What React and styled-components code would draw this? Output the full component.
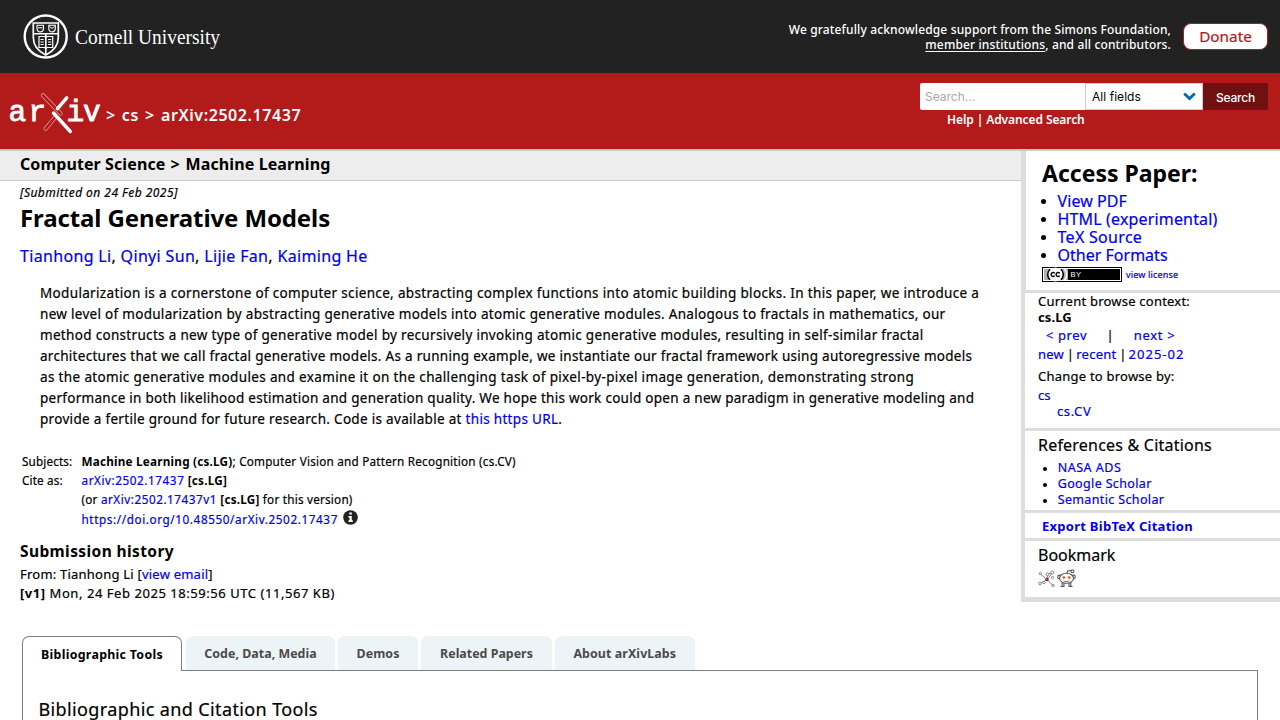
import React from "react";
import styled, { createGlobalStyle } from "styled-components";

const GlobalStyle = createGlobalStyle`
  * { box-sizing: border-box; }
  html { overflow: hidden; }
  body {
    margin: 0;
    height: 720px;
    overflow: hidden;
    background: #fff;
    color: #000;
    font-family: "Noto Sans", "Open Sans", sans-serif;
  }
`;

const Link = styled.a`
  color: ${(p) => p.$color || "#00e"};
  text-decoration: ${(p) => (p.$underline ? "underline" : "none")};
  text-decoration-thickness: 1px;
  text-underline-offset: 2px;
  letter-spacing: ${(p) => (p.$ls !== undefined ? `${p.$ls}px` : "inherit")};
`;

const Separator = styled.span`
  letter-spacing: ${(p) => p.$ls}px;
`;

const Line = styled.div`
  font-size: ${(p) => p.$size}px;
  line-height: ${(p) => p.$lh}px;
  height: ${(p) => p.$lh}px;
  letter-spacing: ${(p) => p.$ls || 0}px;
  word-spacing: ${(p) => p.$ws || 0}px;
  font-weight: ${(p) => p.$weight || 400};
  -webkit-text-stroke-width: ${(p) => (p.$weight ? 0 : 0.2)}px;
  font-style: ${(p) => (p.$italic ? "italic" : "normal")};
  margin-top: ${(p) => p.$mt || 0}px;
  padding-left: ${(p) => p.$indent || 0}px;
  white-space: pre;
  b { -webkit-text-stroke-width: 0; }
`;

const TopBar = styled.header`
  display: flex;
  justify-content: space-between;
  height: 73px;
  padding: 13px 12px 0 23px;
  background: #222;
  color: #fff;
`;

const Support = styled.div`
  display: flex;
  gap: 12px;
  text-align: right;
  padding-top: 9px;
`;

const Donate = styled.a`
  width: 85px;
  height: 27px;
  margin-top: 1px;
  border: 1px solid #b31b1b;
  border-radius: 8px;
  background: #fff;
  color: #b31b1b;
  font-size: 15.3px;
  -webkit-text-stroke-width: 0.2px;
  line-height: 24px;
  text-align: center;
`;

const RedBar = styled.div`
  display: flex;
  justify-content: space-between;
  height: 78px;
  padding: 10px 12px 0 8px;
  background: #b31b1b;
  border-bottom: 2px solid #ccc;
  color: #fff;
`;

const Brand = styled.div`
  display: flex;
  gap: 4px;
  padding-top: 8px;
`;

const SearchArea = styled.div`
  width: 348px;
`;

const SearchForm = styled.div`
  display: flex;
  height: 27px;
  margin-bottom: 2px;
  border-radius: 2px;
  overflow: hidden;
  font-family: Inter, sans-serif;
  font-size: 12px;
  line-height: 27px;
`;

const SearchInput = styled.div`
  width: 165px;
  padding-left: 5px;
  background: #fff;
  color: #a9a9a9;
`;

const FieldSelect = styled.div`
  display: flex;
  align-items: center;
  justify-content: space-between;
  width: 118px;
  padding: 0 6px;
  border: 1px solid #ccc;
  background: #fff;
  color: #000;
  letter-spacing: 0.05px;
`;

const SearchButton = styled.div`
  width: 65px;
  padding-top: 1px;
  background: #701111;
  text-align: center;
  font-weight: 500;
  letter-spacing: -0.2px;
`;

const Columns = styled.div`
  display: flex;
  height: 451px;
`;

const Main = styled.main`
  width: 1021px;
`;

const Subheader = styled.div`
  height: 30px;
  padding-left: 20px;
  background: #ededed;
  border-bottom: 1px solid #ccc;
`;

const Article = styled.div`
  padding-left: 20px;
`;

const Abstract = styled.div`
  margin-top: 17px;
  padding-left: 20px;
`;

const MetaTable = styled.div`
  display: grid;
  grid-template-columns: 59.5px 1fr;
  margin-top: 22px;
  padding-left: 2px;
`;

const InfoIcon = styled.svg`
  vertical-align: -1px;
  margin-left: 5px;
`;

const Sidebar = styled.aside`
  width: 259px;
  border-left: 4px solid #ddd;
`;

const Panel = styled.section`
  height: ${(p) => p.$h}px;
  padding: ${(p) => p.$pt || 0}px 0 0 ${(p) => p.$pl || 13}px;
  border-left: ${(p) => p.$edge || 0}px solid #ddd;
  border-bottom: ${(p) => p.$rule || 3}px solid #ddd;
`;

const BulletList = styled.ul`
  list-style: none;
  margin: ${(p) => p.$mt}px 0 0;
  padding: 0;
`;

const BulletItem = styled.li`
  display: flex;
  align-items: center;
  height: ${(p) => p.$lh}px;
  font-size: ${(p) => p.$size}px;
  -webkit-text-stroke-width: 0.2px;
  line-height: ${(p) => p.$lh}px;
  letter-spacing: ${(p) => p.$ls}px;
  white-space: nowrap;
  &::before {
    content: "";
    width: ${(p) => p.$dot}px;
    height: ${(p) => p.$dot}px;
    margin: 1px ${(p) => p.$gap}px 0 ${(p) => p.$lead}px;
    border-radius: 50%;
    background: #000;
  }
`;

const License = styled.div`
  display: flex;
  gap: 4px;
  margin-top: 3px;
`;

const Bookmarks = styled.div`
  display: flex;
  gap: 2px;
  margin-top: 4px;
`;

const Labs = styled.div`
  margin: 34px 22px 0;
`;

const Tabs = styled.div`
  display: flex;
  align-items: flex-start;
  height: 34px;
`;

const Tab = styled.div`
  position: relative;
  width: ${(p) => p.$w}px;
  height: ${(p) => (p.$active ? 35 : 34)}px;
  margin-right: ${(p) => (p.$active ? 4 : 3)}px;
  padding-top: 1px;
  border: ${(p) => (p.$active ? "1px solid #7c7c7c" : "0")};
  border-bottom: 0;
  border-radius: 7px 7px 0 0;
  background: ${(p) => (p.$active ? "#fff" : "#ecf4f8")};
  color: ${(p) => (p.$active ? "#000" : "#4a4a4a")};
  font-size: 12.4px;
  font-weight: 700;
  line-height: 33px;
  letter-spacing: ${(p) => p.$ls}px;
  text-align: center;
  white-space: nowrap;
`;

const LabPanel = styled.div`
  height: 50px;
  padding: 25px 0 0 15.5px;
  border: 1px solid #7c7c7c;
  border-bottom: 0;
`;

const CornellLogo = () => (
  <svg width="220" height="48" viewBox="23 13 220 48" fill="none" stroke="#fff">
    <circle cx="45.700" cy="36.500" r="21" strokeWidth="2.400" />
    <path d="M33.300 23h25v14.500c0 8-4.500 13.500-12.500 17.500c-8-4-12.500-9.500-12.500-17.500z" strokeWidth="1.700" />
    <path d="M33.500 33.800h24.500M45.800 34v20.500" strokeWidth="1.600" />
    <path d="M37 25.200h6.500v3.500c0 2-1.300 3-3.200 3.300c-2-.3-3.300-1.300-3.300-3.300zM48.800 25.200h6.500v3.500c0 2-1.300 3-3.200 3.300c-2-.3-3.300-1.300-3.300-3.300z" strokeWidth="1.100" />
    <path d="M38 27.800h4.500M49.500 26.500l2.500 2l2.500-2" strokeWidth="1" />
    <path d="M39 36.500h5.500l1.300 1l1.300-1h5.600v11h-5.600l-1.300 1l-1.300-1h-5.500z" strokeWidth="1.200" />
    <path d="M40.500 39.500h3.200M40.500 42h3.200M40.500 44.500h3.200M48 39.500h3.200M48 42h3.200M48 44.500h3.200" strokeWidth="1" />
    <text x="75" y="44" fill="#fff" stroke="none" fontFamily="'Liberation Serif', serif" fontSize="22" textLength="145" lengthAdjust="spacingAndGlyphs">
      Cornell University
    </text>
  </svg>
);

const ArxivLogo = () => (
  <svg width="94" height="46" viewBox="8 91 94 46" fill="none" stroke="#fff">
    <g fill="#fff" stroke="#fff" strokeWidth=".8" fontFamily="'Liberation Mono', monospace" fontSize="29.500">
      <text x="8.500" y="121">a</text>
      <text x="28.500" y="121">r</text>
      <text x="66.500" y="121">i</text>
      <text x="83" y="121">v</text>
    </g>
    <g strokeLinecap="round">
      <path d="M43 95.300L60.500 113.500M55 117.500L45.700 128.700" stroke="#dc9494" strokeWidth="4.200" />
      <path d="M43 95.300L60.500 113.500M55 117.500L45.700 128.700" stroke="#b31b1b" strokeWidth="2.600" />
      <path d="M66.700 97.800L57.500 108.700M53.500 113L70.300 131.500" strokeWidth="3.400" />
    </g>
  </svg>
);

const LicenseBadge = () => (
  <svg width="80" height="15" viewBox="0 0 80 15">
    <rect width="80" height="15" fill="#000" />
    <rect x="1" y="1" width="78" height="13" fill="#fff" />
    <rect x="2" y="2" width="24" height="11" fill="#aab2ab" />
    <rect x="26" y="2" width="52" height="11" fill="#000" />
    <circle cx="13.500" cy="7.500" r="7" fill="#fff" />
    <path d="M8 2.200a7.200 7.200 0 0 0 0 10.600M19 2.200a7.200 7.200 0 0 1 0 10.600" fill="none" stroke="#000" strokeWidth="1.500" />
    <path d="M22.500 2a8 8 0 0 1 0 11" fill="none" stroke="#fff" strokeWidth="1.500" />
    <path d="M12.700 6.300a2 2 0 1 0 0 2.400M17.700 6.300a2 2 0 1 0 0 2.400" fill="none" stroke="#000" strokeWidth="1.400" />
    <text x="28.500" y="10" fill="#fff" fontFamily="'Liberation Sans', sans-serif" fontSize="7.500" letterSpacing=".4">BY</text>
  </svg>
);

const BibSonomy = () => (
  <svg width="17" height="19" viewBox="0 0 17 19" fill="none" stroke="#777" strokeWidth=".9">
    <path d="M9 10.500L2.500 5M9 10.500L15 16.500M9 10.500L3 14M9 10.500L9.500 6M9.500 10L14 4.500M9.500 5.500L14 3.500" />
    <g fill="#fff">
      <circle cx="2.300" cy="4.500" r="1.100" />
      <circle cx="9.500" cy="5.300" r="1.500" />
      <circle cx="14.300" cy="3.500" r="1.500" />
      <circle cx="14.500" cy="8.500" r="1.100" />
      <circle cx="6" cy="13.500" r="1.200" />
      <circle cx="2" cy="14.500" r="1.300" />
      <circle cx="15" cy="16.500" r="1.100" />
    </g>
    <circle cx="9" cy="10.500" r="1.300" fill="#b03050" stroke="#7a2843" />
  </svg>
);

const Reddit = () => (
  <svg width="19" height="20" viewBox="0 0 19 20" fill="#fff" stroke="#555" strokeWidth="1.100">
    <path d="M9.500 5L11 1.500L14.500 2" fill="none" />
    <circle cx="15.500" cy="2.200" r="1.500" />
    <path d="M5.200 12.500v5M13.800 12.500v5M3.500 17.500h4M11.500 17.500h4M7 14v3.500M12 14v3.500" />
    <circle cx="2.600" cy="8" r="1.900" />
    <circle cx="16.400" cy="8" r="1.900" />
    <ellipse cx="9.500" cy="9.300" rx="7" ry="5" />
    <path d="M6.500 11.800c1.800 1.200 4.200 1.200 6 0" fill="none" strokeWidth=".8" />
    <g fill="#ff4500" stroke="none">
      <circle cx="6.800" cy="8.500" r="1.300" />
      <circle cx="12.200" cy="8.500" r="1.300" />
    </g>
  </svg>
);

const abstractLines = [
  ["Modularization is a cornerstone of computer science, abstracting complex functions into atomic building blocks. In this paper, we introduce a", 0.335],
  ["new level of modularization by abstracting generative models into atomic generative modules. Analogous to fractals in mathematics, our", 0.295],
  ["method constructs a new type of generative model by recursively invoking atomic generative modules, resulting in self-similar fractal", 0.315],
  ["architectures that we call fractal generative models. As a running example, we instantiate our fractal framework using autoregressive models", 0.287],
  ["as the atomic generative modules and examine it on the challenging task of pixel-by-pixel image generation, demonstrating strong", 0.355],
  ["performance in both likelihood estimation and generation quality. We hope this work could open a new paradigm in generative modeling and", 0.275],
];

const tabs = [
  ["Bibliographic Tools", 160, 0.29],
  ["Code, Data, Media", 149, 0.03],
  ["Demos", 80, 0.08],
  ["Related Papers", 131, 0.02],
  ["About arXivLabs", 139.5, 0.1],
];

const Bullets = ({ items, mt, ...item }) => (
  <BulletList $mt={mt}>
    {items.map(([label, ls]) => (
      <BulletItem key={label} $ls={ls} {...item}>
        <Link>{label}</Link>
      </BulletItem>
    ))}
  </BulletList>
);

export default function App() {
  return (
    <>
      <GlobalStyle />
      <TopBar>
        <CornellLogo />
        <Support>
          <div>
            <Line $size={12} $lh={15} $ls={0.14} $weight={500}>We gratefully acknowledge support from the Simons Foundation,</Line>
            <Line $size={12} $lh={15} $ls={0.14} $weight={500}>
              <Link $color="#fff" $underline>member institutions</Link>, and all contributors.
            </Line>
          </div>
          <Donate>Donate</Donate>
        </Support>
      </TopBar>
      <RedBar>
        <Brand>
          <ArxivLogo />
          <Line $size={16} $lh={20} $ls={0.58} $ws={1.4} $weight={600} $mt={14}>{"> cs > arXiv:2502.17437"}</Line>
        </Brand>
        <SearchArea>
          <SearchForm>
            <SearchInput>Search...</SearchInput>
            <FieldSelect>
              All fields
              <svg width="13" height="9" viewBox="0 0 13 9" fill="none" stroke="#0068ac" strokeWidth="2.800">
                <path d="M1.200 1.500L6.500 6.500L11.800 1.500" />
              </svg>
            </FieldSelect>
            <SearchButton>Search</SearchButton>
          </SearchForm>
          <Line $size={12} $lh={15} $ls={-0.09} $weight={600} $indent={27}>Help | Advanced Search</Line>
        </SearchArea>
      </RedBar>

      <Columns>
        <Main>
          <Subheader>
            <Line $size={16} $lh={26} $ls={0.1} $weight={700}>Computer Science<Separator $ls={0.9}>{" > "}</Separator>Machine Learning</Line>
          </Subheader>
          <Article>
            <Line $size={12} $lh={15} $ls={0.46} $italic $mt={4}>[Submitted on 24 Feb 2025]</Line>
            <Line $size={24} $lh={30} $ls={-0.11} $weight={700} $mt={3}>Fractal Generative Models</Line>
            <Line $size={16} $lh={20} $ls={0.33} $mt={13}>
              <Link>Tianhong Li</Link>, <Link>Qinyi Sun</Link>, <Link>Lijie Fan</Link>, <Link>Kaiming He</Link>
            </Line>
            <Abstract>
              {abstractLines.map(([text, ls]) => (
                <Line key={text} $size={13.5} $lh={21} $ls={ls}>{text}</Line>
              ))}
              <Line $size={13.5} $lh={21} $ls={0.31}>
                provide a fertile ground for future research. Code is available at <Link>this https URL</Link>.
              </Line>
            </Abstract>
            <MetaTable>
              <Line $size={11.7} $lh={19} $ls={0.15}>Subjects:</Line>
              <Line $size={11.7} $lh={19} $ls={0.23}><b>Machine Learning (cs.LG)</b>; Computer Vision and Pattern Recognition (cs.CV)</Line>
              <Line $size={11.7} $lh={19} $ls={0.15}>Cite as:</Line>
              <Line $size={11.7} $lh={19} $ls={0.23}><Link $ls={0.58}>arXiv:2502.17437</Link> <b>[cs.LG]</b></Line>
              <span />
              <Line $size={11.7} $lh={19} $ls={0.23}>(or <Link $ls={0.55}>arXiv:2502.17437v1</Link> <b>[cs.LG]</b> for this version)</Line>
              <span />
              <Line $size={11.7} $lh={19} $ls={0.61} $mt={1}>
                <Link>https://doi.org/10.48550/arXiv.2502.17437</Link>
                <InfoIcon width="15" height="15" viewBox="0 0 15 15">
                  <circle cx="7.500" cy="7.500" r="7.300" fill="#222" />
                  <path d="M6.300 2.500h2.500v2H6.300zM5.500 6h3.300v4.200h1V12H5.500v-1.800h1V7.800h-1z" fill="#fff" />
                </InfoIcon>
              </Line>
            </MetaTable>
            <Line $size={15.5} $lh={20} $ls={0.4} $weight={700} $mt={12}>Submission history</Line>
            <Line $size={13} $lh={18} $ls={0.22} $mt={4}>From: Tianhong Li [<Link>view email</Link>]</Line>
            <Line $size={13} $lh={18} $ls={0.55} $mt={1}><b>[v1]</b> Mon, 24 Feb 2025 18:59:56 UTC (11,567 KB)</Line>
          </Article>
        </Main>

        <Sidebar>
          <Panel $h={142} $pt={8} $pl={16} $edge={1}>
            <Line $size={23} $lh={28} $weight={700}>Access Paper:</Line>
            <Bullets
              mt={5} $size={16} $lh={18} $dot={5.5} $gap={11.2} $lead={-1.2}
              items={[["View PDF", 0.08], ["HTML (experimental)", 0.16], ["TeX Source", 0.3], ["Other Formats", 0.01]]}
            />
            <License>
              <LicenseBadge />
              <Line $size={9} $lh={15} $ls={0.17}><Link>view license</Link></Line>
            </License>
          </Panel>
          <Panel $h={138}>
            <Line $size={13} $lh={16} $ls={0.22}>Current browse context:</Line>
            <Line $size={13} $lh={16} $weight={700} $ls={0.1}>cs.LG</Line>
            <Line $size={13} $lh={16} $mt={2} $indent={8}><Link $ls={0.6}>{"< prev"}</Link><Separator $ls={0.5}>{"     |     "}</Separator><Link $ls={0.7}>{"next >"}</Link></Line>
            <Line $size={13} $lh={16} $ls={0.25} $mt={3}><Link>new</Link><Separator $ls={-0.6}> | </Separator><Link>recent</Link><Separator $ls={-0.6}> | </Separator><Link $ls={1}>2025-02</Link></Line>
            <Line $size={13} $lh={16} $ls={0.23} $mt={6}>Change to browse by:</Line>
            <Line $size={13} $lh={16} $mt={3}><Link>cs</Link></Line>
            <Line $size={13} $lh={16} $ls={0.6} $indent={19}><Link>cs.CV</Link></Line>
          </Panel>
          <Panel $h={82} $pt={4}>
            <Line $size={16} $lh={20} $ls={0.21}>References & Citations</Line>
            <Bullets
              mt={5} $size={12.5} $lh={16} $dot={4} $gap={10.7} $lead={5}
              items={[["NASA ADS", 0.5], ["Google Scholar", 0.36], ["Semantic Scholar", 0.36]]}
            />
          </Panel>
          <Panel $h={28} $pt={5} $pl={17}>
            <Line $size={13} $lh={16} $ls={0.27} $weight={700}><Link>Export BibTeX Citation</Link></Line>
          </Panel>
          <Panel $h={61} $pt={4} $rule={5}>
            <Line $size={16} $lh={20}>Bookmark</Line>
            <Bookmarks>
              <BibSonomy />
              <Reddit />
            </Bookmarks>
          </Panel>
        </Sidebar>
      </Columns>

      <Labs>
        <Tabs>
          {tabs.map(([label, w, ls], i) => (
            <Tab key={label} $w={w} $ls={ls} $active={i === 0}>{label}</Tab>
          ))}
        </Tabs>
        <LabPanel>
          <Line $size={18} $lh={26} $ls={0.38}>Bibliographic and Citation Tools</Line>
        </LabPanel>
      </Labs>
    </>
  );
}
